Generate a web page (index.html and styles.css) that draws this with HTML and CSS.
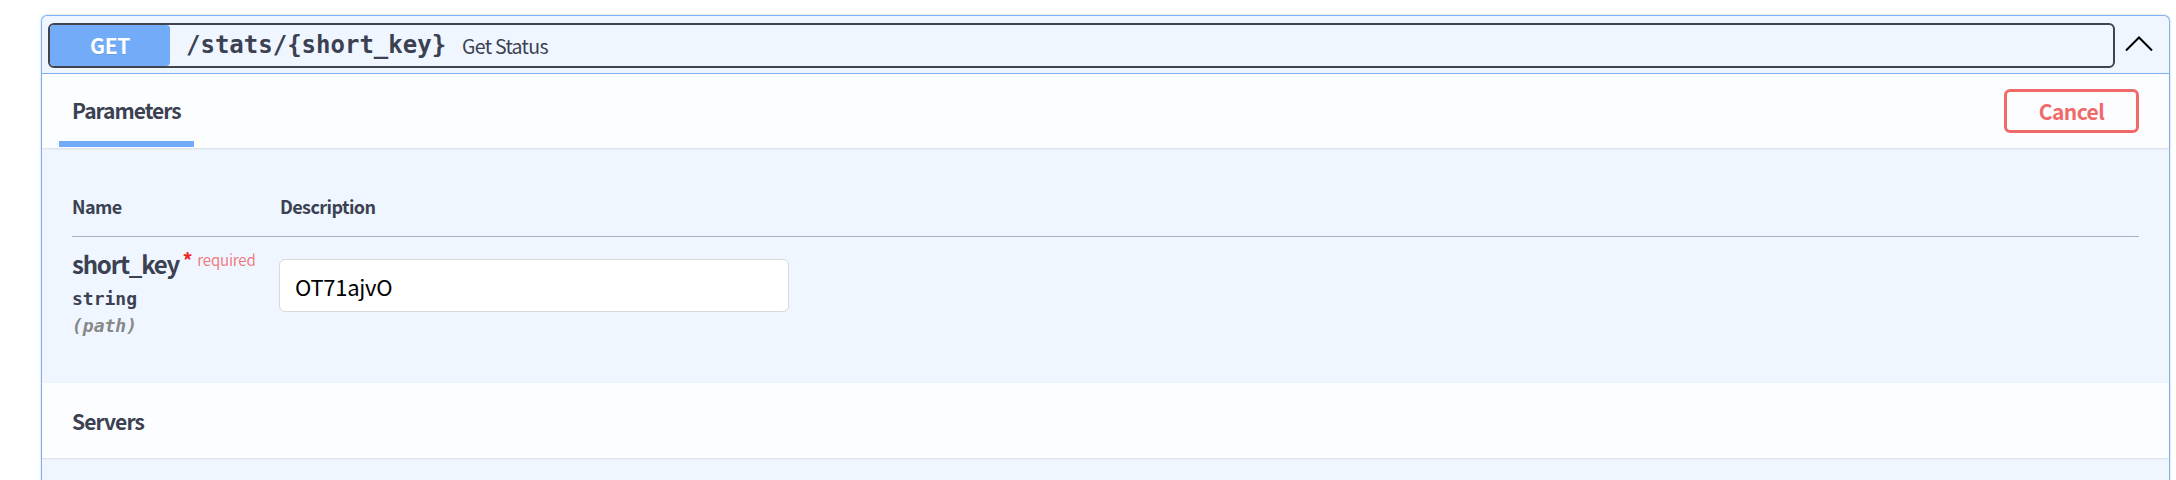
FILE: index.html
```html
<!DOCTYPE html>
<html lang="en">
<head>
<meta charset="utf-8">
<title>GET /stats/{short_key}</title>
<link rel="stylesheet" href="styles.css">
</head>
<body>
<div class="page">
  <div class="opblock">
    <div class="summary">
      <div class="summary-control">
        <span class="method">GET</span>
        <span class="path">/stats/{short_key}</span>
        <span class="desc">Get Status</span>
      </div>
      <div class="arrow">
        <svg width="30" height="18" viewBox="0 0 30 18"><polyline points="2,15.5 15,2.5 28,15.5" fill="none" stroke="#000" stroke-width="2"/></svg>
      </div>
    </div>
    <div class="section-header">
      <div class="tab">
        <span class="tab-label">Parameters</span>
        <span class="tab-bar"></span>
      </div>
      <button class="cancel">Cancel</button>
    </div>
    <div class="params">
      <div class="params-head">
        <div class="col-name">Name</div>
        <div class="col-desc">Description</div>
      </div>
      <div class="params-row">
        <div class="col-name">
          <div class="param-name">short_key<span class="star">&nbsp;*</span><span class="req">required</span></div>
          <div class="param-type">string</div>
          <div class="param-in">(path)</div>
        </div>
        <div class="col-desc">
          <input class="text-input" type="text" value="OT71ajvO">
        </div>
      </div>
    </div>
    <div class="section-header servers">
      <span class="servers-label">Servers</span>
    </div>
    <div class="rest"></div>
  </div>
</div>
</body>
</html>
```

FILE: styles.css
```css
* { box-sizing: border-box; }
html, body { margin: 0; padding: 0; background: #fff; }
body {
  font-family: "Noto Sans CJK KR", "Noto Sans", sans-serif;
  color: #3b4151;
  height: 480px;
  overflow: hidden;
}
.page {
  padding: 15px 6px 0 41px;
}
.opblock {
  border: 1px solid #7db2f6;
  border-bottom: none;
  border-radius: 6px 6px 0 0;
  background: #eff6ff;
  box-shadow: 0 0 3px rgba(0, 0, 0, 0.19);
  height: 480px;
}
.summary {
  display: flex;
  align-items: center;
  padding: 6px 7px 5px 6px;
  border-bottom: 1px solid #7db2f6;
  height: 58px;
}
.summary-control {
  flex: 1;
  display: flex;
  align-items: center;
  height: 45px;
  border: 2px solid #41444e;
  border-radius: 6px;
  overflow: hidden;
}
.method {
  width: 120px;
  align-self: stretch;
  display: flex;
  align-items: center;
  justify-content: center;
  background: #72abf7;
  color: #fff;
  font-weight: 700;
  font-size: 21px;
  letter-spacing: -0.3px;
  border-radius: 4px;
  text-shadow: 0 1px 0 rgba(0, 0, 0, 0.1);
}
.path {
  font-family: "DejaVu Sans Mono", monospace;
  font-weight: 700;
  font-size: 24px;
  padding: 0 16px 0 16px;
  color: #3b4151;
}
.desc {
  font-size: 19.5px;
  letter-spacing: -0.7px;
  color: #3b4151;
}
.arrow {
  width: 47px;
  display: flex;
  justify-content: center;
  align-items: center;
}
.arrow svg { display: block; margin-left: 1px; margin-bottom: 2px; }
.section-header {
  display: flex;
  align-items: stretch;
  justify-content: space-between;
  height: 74px;
  padding: 0 30px;
  background: #fcfdff;
  box-shadow: 0 1px 2px rgba(0, 0, 0, 0.1);
  position: relative;
}
.tab {
  display: flex;
  flex-direction: column;
}
.tab-label {
  flex: 1;
  display: flex;
  align-items: center;
  padding-top: 5px;
  font-weight: 700;
  font-size: 21px;
  letter-spacing: -1px;
}
.tab-bar {
  height: 6px;
  margin: 0 -12% 1px;
  background: #72abf7;
}
.cancel {
  align-self: center;
  font-family: inherit;
  font-weight: 700;
  font-size: 21px;
  letter-spacing: -0.6px;
  color: #f06a6a;
  background: transparent;
  border: 3px solid #f06a6a;
  border-radius: 6px;
  width: 135px;
  height: 44px;
  padding: 0;
  line-height: 36px;
}
.params {
  padding: 30px 30px 30px 30px;
  height: 235px;
}
.params-head {
  display: flex;
  border-bottom: 1px solid #a8b0bd;
  padding: 17px 0 19px;
  font-weight: 700;
  font-size: 18px;
  letter-spacing: -0.6px;
  line-height: 22px;
}
.col-name { width: 208px; flex: none; }
.col-desc { flex: 1; }
.params-row {
  display: flex;
  padding: 14px 0;
  align-items: flex-start;
}
.param-name {
  font-size: 24px;
  font-weight: 700;
  letter-spacing: -1.2px;
  line-height: 26px;
  white-space: nowrap;
}
.star {
  color: #f02020;
  font-size: 20px;
  font-weight: 700;
  position: relative;
  top: -6px;
}
.req {
  color: rgba(240, 30, 30, 0.6);
  font-size: 15px;
  font-weight: 400;
  letter-spacing: -0.2px;
  padding-left: 6px;
  position: relative;
  top: -8px;
}
.param-type {
  font-family: "DejaVu Sans Mono", monospace;
  font-weight: 700;
  font-size: 18px;
  line-height: 24px;
  padding: 6px 0 5px;
}
.param-in {
  font-family: "DejaVu Sans Mono", monospace;
  font-weight: 700;
  font-style: italic;
  font-size: 18px;
  line-height: 20px;
  color: #888;
}
.text-input {
  display: block;
  margin: 8px 0 0 -1px;
  width: 510px;
  height: 53px;
  padding: 0 15px;
  border: 1.5px solid #d9d9d9;
  border-radius: 6px;
  background: #fff;
  font-family: "Noto Sans CJK KR", "Noto Sans", sans-serif;
  font-size: 22px;
  letter-spacing: -0.3px;
  color: #000;
  outline: none;
}
.servers {
  align-items: center;
  height: 75px;
}
.servers-label {
  font-weight: 700;
  font-size: 21px;
  letter-spacing: -0.9px;
  padding-top: 0;
}
.rest { height: 40px; }
```
